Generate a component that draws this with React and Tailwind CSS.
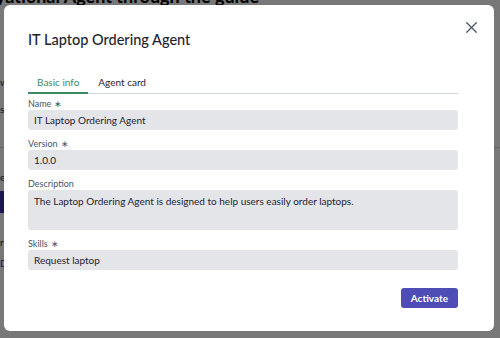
import React, { useState } from "react";
import { X } from "lucide-react";

const font = { fontFamily: "Lato, 'Noto Sans', sans-serif" };

function Field({ label, required, children }) {
  return (
    <div className="flex flex-col">
      <label className="flex items-center h-[12px] text-[9px] text-gray-600">
        {label}
        {required && <span className="ml-[3px] text-[9px]">∗</span>}
      </label>
      {children}
    </div>
  );
}

export default function App() {
  const [tab, setTab] = useState("basic");
  const [name, setName] = useState("IT Laptop Ordering Agent");
  const [version, setVersion] = useState("1.0.0");
  const [description, setDescription] = useState(
    "The Laptop Ordering Agent is designed to help users easily order laptops."
  );
  const [skills, setSkills] = useState("Request laptop");

  const inputCls =
    "w-full h-[20px] px-[6px] bg-[#e4e5e9] rounded-[3px] text-[10px] text-[#1f2430] outline-none";

  return (
    <div className="relative w-[500px] h-[338px] overflow-hidden bg-white" style={font}>
      {/* page behind the dialog */}
      <div>
        <h1 className="h-[5px] overflow-hidden">
          <span className="block -mt-[13px] text-[18px] leading-[18px] font-bold text-black whitespace-nowrap -ml-[4px]">
            yational Agent through the guide
          </span>
        </h1>
        <div className="mt-[70px] text-[10px] text-gray-800">w</div>
        <div className="mt-[12px] text-[10px] text-gray-800">s</div>
        <div className="mt-[30px] h-px bg-gray-300" />
        <div className="mt-[22px] text-[10px] text-gray-800">e</div>
        <div className="mt-[6px] w-[6px] h-[22px] bg-[#3730a3]" />
        <div className="mt-[22px] text-[10px] text-gray-800">r</div>
        <div className="mt-[6px] text-[10px] text-[#3730a3]">D</div>
      </div>

      {/* overlay */}
      <div className="absolute inset-0 bg-black/[0.53]" />

      {/* dialog */}
      <div className="absolute left-[4px] top-[5px] w-[490px] h-[326px] bg-white rounded-[6px] pl-6 pr-9 pt-[23px]">
        <button className="absolute right-[13px] top-[13px] text-gray-600">
          <X size={19} strokeWidth={1.6} />
        </button>

        <h2 className="text-[14.5px] leading-[24px] font-medium text-[#1f2430]">
          IT Laptop Ordering Agent
        </h2>

        <div className="mt-[20px] flex border-b border-gray-300">
          <button
            onClick={() => setTab("basic")}
            className={`px-[9px] h-[22px] text-[10px] -mb-px border-b-2 ${
              tab === "basic"
                ? "text-[#3d8b62] border-[#3d8b62]"
                : "text-[#1f2430] border-transparent"
            }`}
          >
            Basic info
          </button>
          <button
            onClick={() => setTab("card")}
            className={`px-[10px] h-[22px] text-[10px] -mb-px border-b-2 ${
              tab === "card"
                ? "text-[#3d8b62] border-[#3d8b62]"
                : "text-[#1f2430] border-transparent"
            }`}
          >
            Agent card
          </button>
        </div>

        <div className="mt-[4px] flex flex-col gap-[8px]">
          <Field label="Name" required>
            <input className={inputCls} value={name} onChange={(e) => setName(e.target.value)} />
          </Field>
          <Field label="Version" required>
            <input className={inputCls} value={version} onChange={(e) => setVersion(e.target.value)} />
          </Field>
          <Field label="Description">
            <textarea
              className="w-full h-[40px] px-[6px] py-[3px] bg-[#e4e5e9] rounded-[3px] text-[10px] leading-[16px] text-[#1f2430] outline-none resize-none"
              value={description}
              onChange={(e) => setDescription(e.target.value)}
            />
          </Field>
          <Field label="Skills" required>
            <input className={inputCls} value={skills} onChange={(e) => setSkills(e.target.value)} />
          </Field>
        </div>

        <div className="mt-[18px] flex justify-end">
          <button className="h-[20px] px-[10px] rounded-[3px] bg-[#4d4db5] text-white text-[10px] font-bold">
            Activate
          </button>
        </div>
      </div>
    </div>
  );
}
